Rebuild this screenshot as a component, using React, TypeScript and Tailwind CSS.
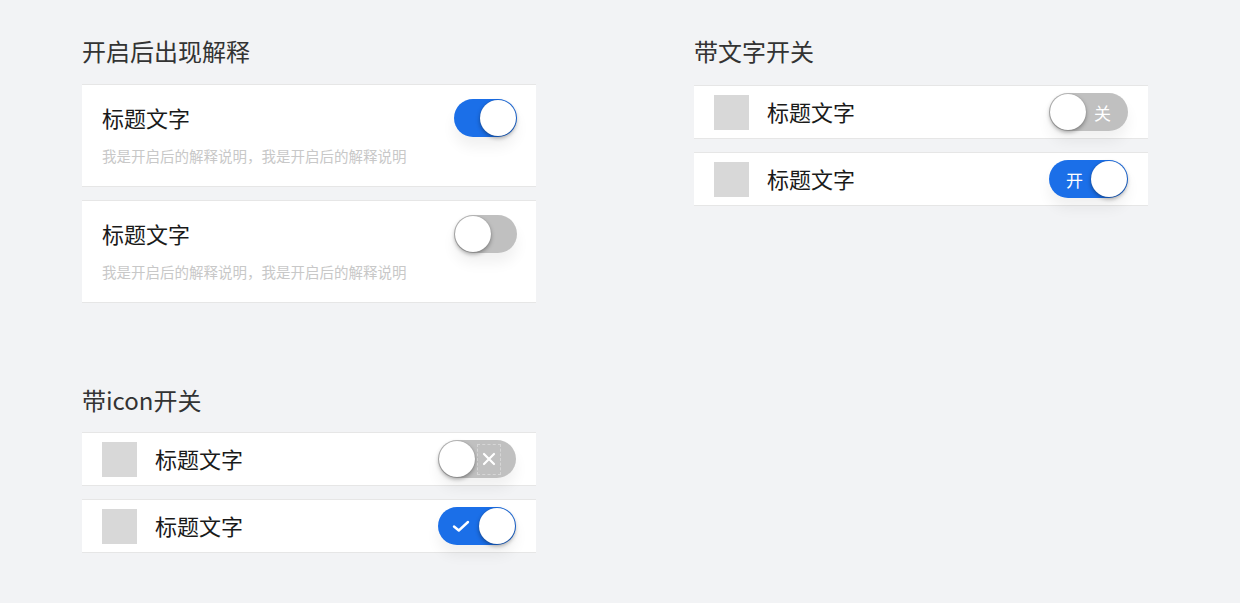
import React from "react";

const BLUE = "bg-[#1b6fe8]";

function Knob() {
  return (
    <div className="h-[36px] w-[36px] shrink-0 rounded-full bg-white shadow-[0_2px_4px_rgba(0,0,0,0.35),0_0_1px_rgba(0,0,0,0.25)]" />
  );
}

function PlainToggle({ on }: { on: boolean }) {
  return (
    <div
      className={`flex h-[38px] w-[63px] items-center rounded-full p-[1px] shadow-[0_10px_14px_rgba(0,0,0,0.06)] ${
        on ? `${BLUE} justify-end` : "bg-[#c0c0c0] justify-start"
      }`}
    >
      <Knob />
    </div>
  );
}

function IconToggle({ on }: { on: boolean }) {
  return (
    <div
      className={`flex h-[38px] w-[78px] items-center rounded-full p-[1px] shadow-[0_10px_14px_rgba(0,0,0,0.06)] ${
        on ? BLUE : "bg-[#c0c0c0]"
      }`}
    >
      {on ? (
        <>
          <div className="flex flex-1 items-center justify-center pl-[4px]">
            <svg width="18" height="14" viewBox="0 0 18 14" fill="none">
              <path d="M2 7.5L6.8 11.5L16 3" stroke="white" strokeWidth="2.4" strokeLinecap="round" strokeLinejoin="round" />
            </svg>
          </div>
          <Knob />
        </>
      ) : (
        <>
          <Knob />
          <div className="flex flex-1 items-center justify-start pl-[2px]">
            <div className="flex h-[31px] w-[24px] items-center justify-center border border-dashed border-white/35">
              <svg width="14" height="14" viewBox="0 0 14 14" fill="none">
                <path d="M2 2L12 12M12 2L2 12" stroke="white" strokeWidth="2.2" strokeLinecap="round" />
              </svg>
            </div>
          </div>
        </>
      )}
    </div>
  );
}

function TextToggle({ on }: { on: boolean }) {
  return (
    <div
      className={`flex h-[38px] w-[79px] items-center rounded-full p-[1px] shadow-[0_10px_14px_rgba(0,0,0,0.06)] ${
        on ? BLUE : "bg-[#c0c0c0]"
      }`}
    >
      {on ? (
        <>
          <div className="flex flex-1 items-center justify-center pl-[8px] text-[17px] leading-none text-white">开</div>
          <Knob />
        </>
      ) : (
        <>
          <Knob />
          <div className="flex flex-1 items-center justify-center pr-[8px] text-[17px] leading-none text-white">关</div>
        </>
      )}
    </div>
  );
}

function SectionTitle({ children, className = "" }: { children: React.ReactNode; className?: string }) {
  return <div className={`h-[34px] text-[24px] leading-[34px] text-[#333333] ${className}`}>{children}</div>;
}

function DescCard({ on }: { on: boolean }) {
  return (
    <div className="flex items-start justify-between border-y border-[#e6e6e6] bg-white pl-[20px] pr-[19px] pt-[14px] pb-[20px]">
      <div className="flex flex-col pt-[3px]">
        <div className="h-[30px] text-[22px] leading-[30px] text-[#1a1a1a]">标题文字</div>
        <div className="mt-[14px] h-[20px] text-[14.5px] leading-[20px] text-[#c8c8c8]">
          我是开启后的解释说明，我是开启后的解释说明
        </div>
      </div>
      <PlainToggle on={on} />
    </div>
  );
}

function IconRow({ children }: { children: React.ReactNode }) {
  return (
    <div className="flex h-[54px] items-center border-y border-[#e6e6e6] bg-white pl-[20px] pr-[20px]">
      <div className="h-[35px] w-[35px] shrink-0 bg-[#d8d8d8]" />
      <div className="ml-[18px] flex-1 pb-[3px] text-[22px] leading-[30px] text-[#1a1a1a]">标题文字</div>
      {children}
    </div>
  );
}

export default function App() {
  return (
    <div className="min-h-screen w-full bg-[#f2f3f5] font-['Noto_Sans_CJK_SC',sans-serif]">
      <div className="flex gap-[158px] pl-[82px] pt-[34px]">
        <div className="flex w-[454px] flex-col">
          <SectionTitle>开启后出现解释</SectionTitle>
          <div className="mt-[16px] flex flex-col gap-[13px]">
            <DescCard on={true} />
            <DescCard on={false} />
          </div>
          <SectionTitle className="mt-[80px]">带icon开关</SectionTitle>
          <div className="mt-[15px] flex flex-col gap-[13px]">
            <IconRow>
              <IconToggle on={false} />
            </IconRow>
            <IconRow>
              <IconToggle on={true} />
            </IconRow>
          </div>
        </div>
        <div className="flex w-[454px] flex-col">
          <SectionTitle>带文字开关</SectionTitle>
          <div className="mt-[17px] flex flex-col gap-[13px]">
            <IconRow>
              <TextToggle on={false} />
            </IconRow>
            <IconRow>
              <TextToggle on={true} />
            </IconRow>
          </div>
        </div>
      </div>
    </div>
  );
}
